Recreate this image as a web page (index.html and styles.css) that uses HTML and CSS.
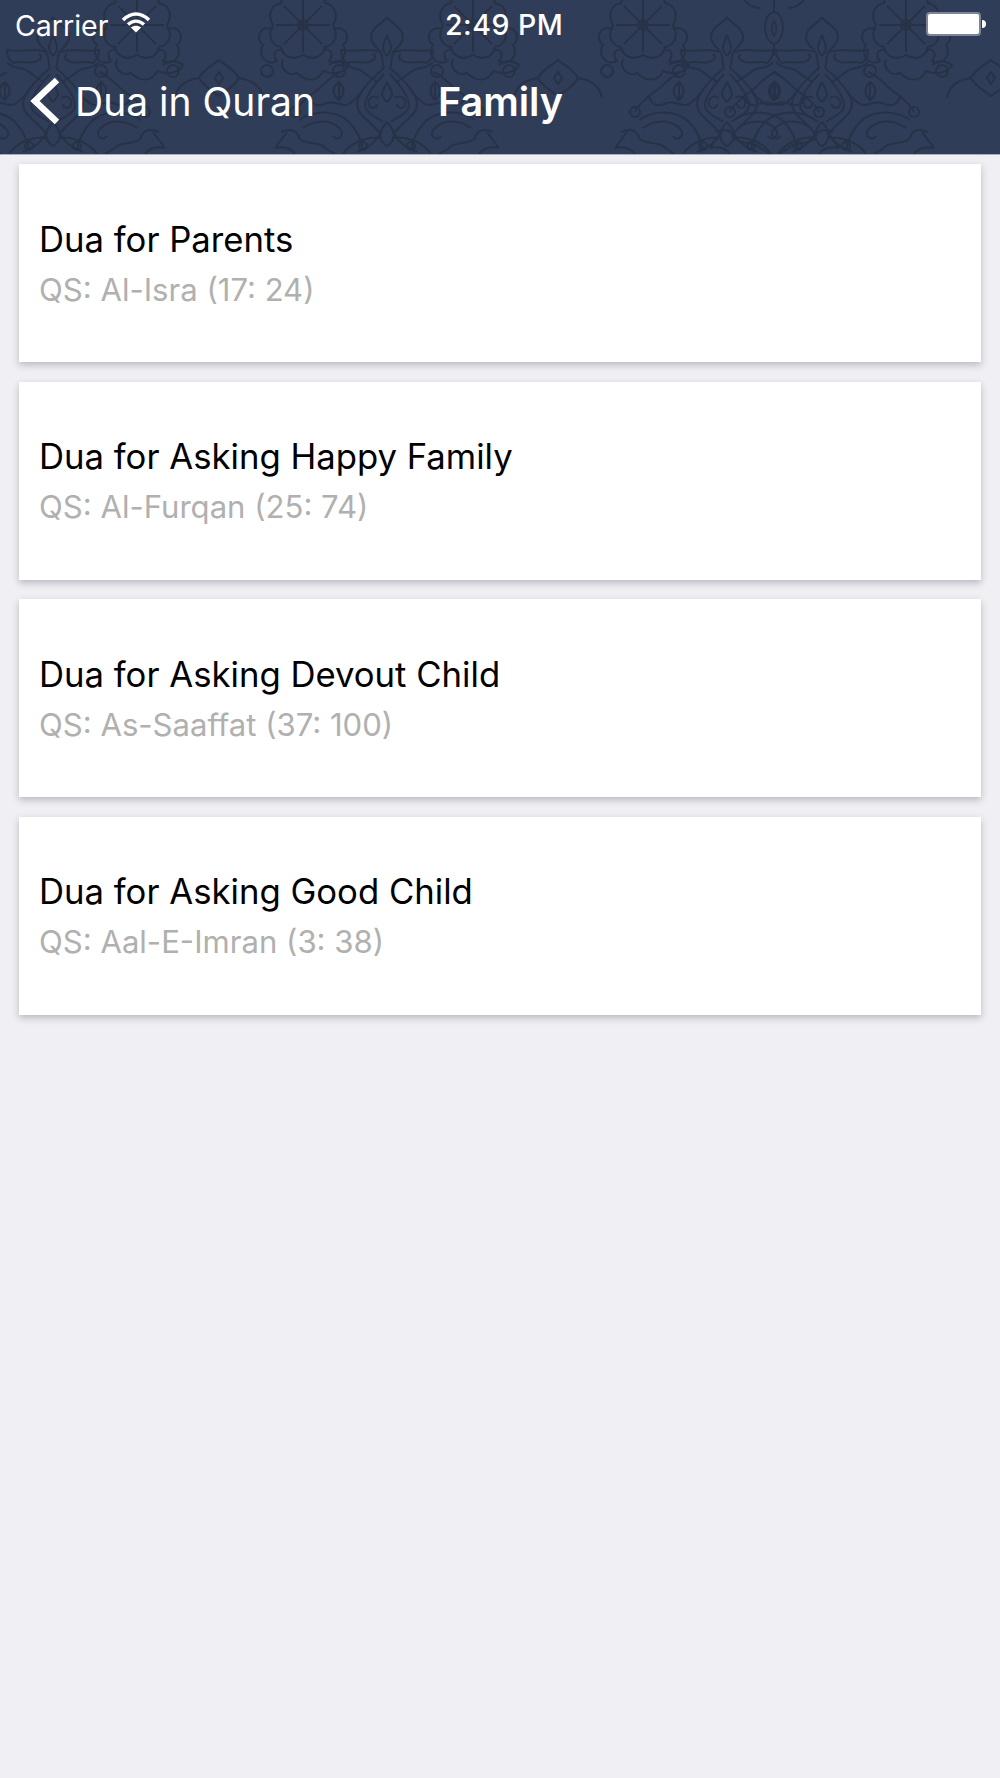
FILE: index.html
```html
<!DOCTYPE html>
<html lang="en">
<head>
<meta charset="utf-8">
<title>Family</title>
<link rel="stylesheet" href="styles.css">
</head>
<body>
<header class="header">
  <svg class="ornament" viewBox="0 0 1000 154" aria-hidden="true">
    <defs>
      <g id="half">
        <path d="M0 17C-3 23-16 27-16 37C-16 45-9 47-6 53C-4 58-5 63-3 68"/>
        <path d="M0 35C-2 41-4 45-4 47C-4 51-2 54 0 56"/>
        <path d="M-3 68C-10 74-30 92-30 104C-30 116-14 122-7 134"/>
        <path d="M-3 74C-8 80-22 94-22 105C-22 113-12 116-4 122"/>
        <path d="M0 82C-3 88-5 92-5 94C-5 97-2 100 0 102"/>
        <path d="M-8 98C-14 94-20 99-18 105C-16 110-10 108-10 104"/>
        <path d="M-8 52C-20 47-32 53-46 50C-46 56-44 60-40 63C-32 60-26 64-18 62C-12 60-10 56-14 54"/>
        <path d="M-46 62C-40 70-30 66-24 72C-20 76-14 78-10 82"/>
        <path d="M-46 72C-58 76-62 86-78 96C-76 104-70 108-60 103C-52 100-44 108-38 104C-32 100-28 96-24 90"/>
        <path d="M-48 82C-56 88-54 96-48 100C-42 94-42 88-48 82ZM-48 82L-48 100"/>
        <path d="M-78 96C-84 102-90 106-92 112"/>
        <circle cx="-92" cy="112" r="5"/>
        <path d="M-88 120C-70 108-48 112-38 122C-30 130-26 140-24 150"/>
        <path d="M-84 128C-70 118-54 120-46 130C-42 136-50 142-54 136"/>
        <path d="M-106 132C-96 128-90 130-88 138C-84 144-72 142-64 146C-60 150-56 152-52 154"/>
        <path d="M-112 148C-104 146-96 148-92 154M-100 132C-104 138-108 142-112 148"/>
        <path d="M-7 134C-12 142-16 146-30 152M0 122C-6 128-8 134-6 140C-2 146 0 146 0 146"/>
        <circle cx="-24" cy="146" r="4"/>
        <path d="M-5 138C-20 136-36 142-44 154"/>
      </g>
      <g id="drop">
        <use href="#half"/>
        <use href="#half" transform="scale(-1 1)"/>
      </g>
      <g id="rosette">
        <circle r="5"/>
        <path d="M0-27V27M-27 0H27M-19-19L19 19M-19 19L19-19"/>
        <path d="M0-30C10-36 20-32 22-22C32-20 36-10 30 0C36 10 32 20 22 22C20 32 10 36 0 30C-10 36-20 32-22 22C-32 20-36 10-30 0C-36-10-32-20-22-22C-20-32-10-36 0-30Z"/>
        <path d="M30 4C44 0 48 14 40 20C46 28 38 42 26 36C32 28 26 22 20 26"/>
        <path d="M-30 4C-44 0-48 14-40 20C-46 28-38 42-26 36C-32 28-26 22-20 26"/>
        <path d="M-20 34C-24 44-14 52-6 48C4 58 16 56 20 46C30 50 42 48 46 40C38 34 30 36 26 40"/>
        <circle cx="36" cy="46" r="6"/>
        <circle cx="-36" cy="46" r="6"/>
      </g>
      <g id="gem">
        <path d="M0-18C8-12 16-8 20 0C16 8 8 12 0 18C-8 12-16 8-20 0C-16-8-8-12 0-18Z"/>
        <path d="M0-6L4 0L0 6L-4 0Z"/>
        <path d="M-20 0C-34 2-42 8-44 20M20 0C34 2 42 8 44 20"/>
      </g>
    </defs>
    <g class="ornament-lines">
      <use href="#rosette" transform="translate(137 25)"/>
      <use href="#rosette" transform="translate(303 25)"/>
      <use href="#rosette" transform="translate(473 25)"/>
      <use href="#rosette" transform="translate(643 25)"/>
      <use href="#rosette" transform="translate(906 25)"/>
      <use href="#gem" transform="translate(219 78)"/>
      <use href="#gem" transform="translate(558 78)"/>
      <use href="#gem" transform="translate(991 78)"/>
      <use href="#drop" transform="translate(53 0)"/>
      <use href="#drop" transform="translate(387 0)"/>
      <use href="#drop" transform="translate(727 0)"/>
      <use href="#drop" transform="translate(822 0)"/>
      <path d="M774 0V12M774 12C762 14 762 40 774 44C786 40 786 14 774 12ZM774 21C771 26 771 32 774 36C777 32 777 26 774 21ZM774 44V56M760 8C752 8 748 4 744 0M788 8C796 8 800 4 804 0"/>
    </g>
  </svg>
  <div class="status-bar">
    <div class="status-left">
      <span class="carrier">Carrier</span>
      <svg class="wifi" viewBox="0 0 30 21" aria-hidden="true">
        <path class="wifi-arc" d="M2 8C10 0 20 0 28 8"/>
        <path class="wifi-arc" d="M7 12.500C12 8 18 8 23 12.500"/>
        <path class="wifi-fill" d="M9.800 15.500C13 13 17 13 20.200 15.500L15 20.500Z"/>
      </svg>
    </div>
    <span class="clock">2:49 PM</span>
    <div class="battery">
      <div class="battery-body"></div>
      <div class="battery-nub"></div>
    </div>
  </div>
  <nav class="nav-bar">
    <a class="back">
      <svg class="chevron" viewBox="0 0 32 48" aria-hidden="true">
        <path d="M28 3L6 24L28 45"/>
      </svg>
      <span class="back-label">Dua in Quran</span>
    </a>
    <h1 class="nav-title">Family</h1>
  </nav>
</header>
<main class="list">
  <article class="card">
    <h2 class="card-title">Dua for Parents</h2>
    <p class="card-sub">QS: Al-Isra (17: 24)</p>
  </article>
  <article class="card">
    <h2 class="card-title">Dua for Asking Happy Family</h2>
    <p class="card-sub">QS: Al-Furqan (25: 74)</p>
  </article>
  <article class="card">
    <h2 class="card-title">Dua for Asking Devout Child</h2>
    <p class="card-sub">QS: As-Saaffat (37: 100)</p>
  </article>
  <article class="card">
    <h2 class="card-title">Dua for Asking Good Child</h2>
    <p class="card-sub">QS: Aal-E-Imran (3: 38)</p>
  </article>
</main>
</body>
</html>
```
FILE: styles.css
```css
* { box-sizing: border-box; }
html, body { margin: 0; padding: 0; }
body {
  width: 1000px;
  height: 1778px;
  overflow: hidden;
  background: #efeff4;
  font-family: Inter, "Liberation Sans", sans-serif;
}
.header {
  position: relative;
  height: 155px;
  background: #303d59;
  border-bottom: 1px solid #a9acb8;
  color: #fff;
  overflow: hidden;
}
.ornament {
  position: absolute;
  left: 0;
  top: 0;
  width: 1000px;
  height: 154px;
}
.ornament-lines {
  fill: none;
  stroke: #283247;
  stroke-width: 2;
}
.status-bar {
  position: relative;
  height: 50px;
  display: flex;
  align-items: center;
  justify-content: space-between;
  padding: 0 14px 0 15px;
}
.status-left {
  display: flex;
  align-items: center;
  gap: 13px;
}
.carrier { font-size: 28.500px; }
.wifi { width: 30px; height: 21px; flex: none; margin-top: -6px; }
.wifi-arc { fill: none; stroke: #fff; stroke-width: 3.4; }
.wifi-fill { fill: #fff; }
.clock {
  position: absolute;
  left: 445px;
  top: 7px;
  font-size: 28.500px;
  font-weight: 500;
  letter-spacing: 0.5px;
}
.battery { display: flex; align-items: center; margin-top: -2px; }
.battery-body {
  width: 55px;
  height: 24px;
  background: #fff;
  border: 2px solid #7d8597;
  border-radius: 4px;
}
.battery-nub {
  width: 4px;
  height: 8px;
  background: #fff;
  border-radius: 0 4px 4px 0;
  margin-left: 1px;
}
.nav-bar {
  position: relative;
  height: 104px;
  display: flex;
  align-items: flex-start;
}
.back {
  display: flex;
  align-items: center;
  padding: 27px 0 0 29px;
}
.chevron { width: 32px; height: 48px; flex: none; }
.chevron path { fill: none; stroke: #fff; stroke-width: 6.500; }
.back-label { font-size: 39px; margin-left: 14px; }
.nav-title {
  margin: 28px 0 0 123px;
  font-size: 39.500px;
  font-weight: 600;
}
.list {
  display: flex;
  flex-direction: column;
  gap: 19.500px;
  padding: 9px 19px 0;
}
.card {
  height: 198px;
  display: flex;
  flex-direction: column;
  justify-content: center;
  padding: 2px 20px 0;
  background: #fff;
  box-shadow: 0 3px 7px rgba(60, 60, 70, 0.3);
}
.card-title {
  margin: 0;
  font-size: 34.700px;
  font-weight: 400;
  line-height: 50px;
  color: #000;
}
.card-sub {
  margin: 1px 0 0;
  font-size: 31.100px;
  line-height: 50px;
  color: #b0b0b0;
}
```
